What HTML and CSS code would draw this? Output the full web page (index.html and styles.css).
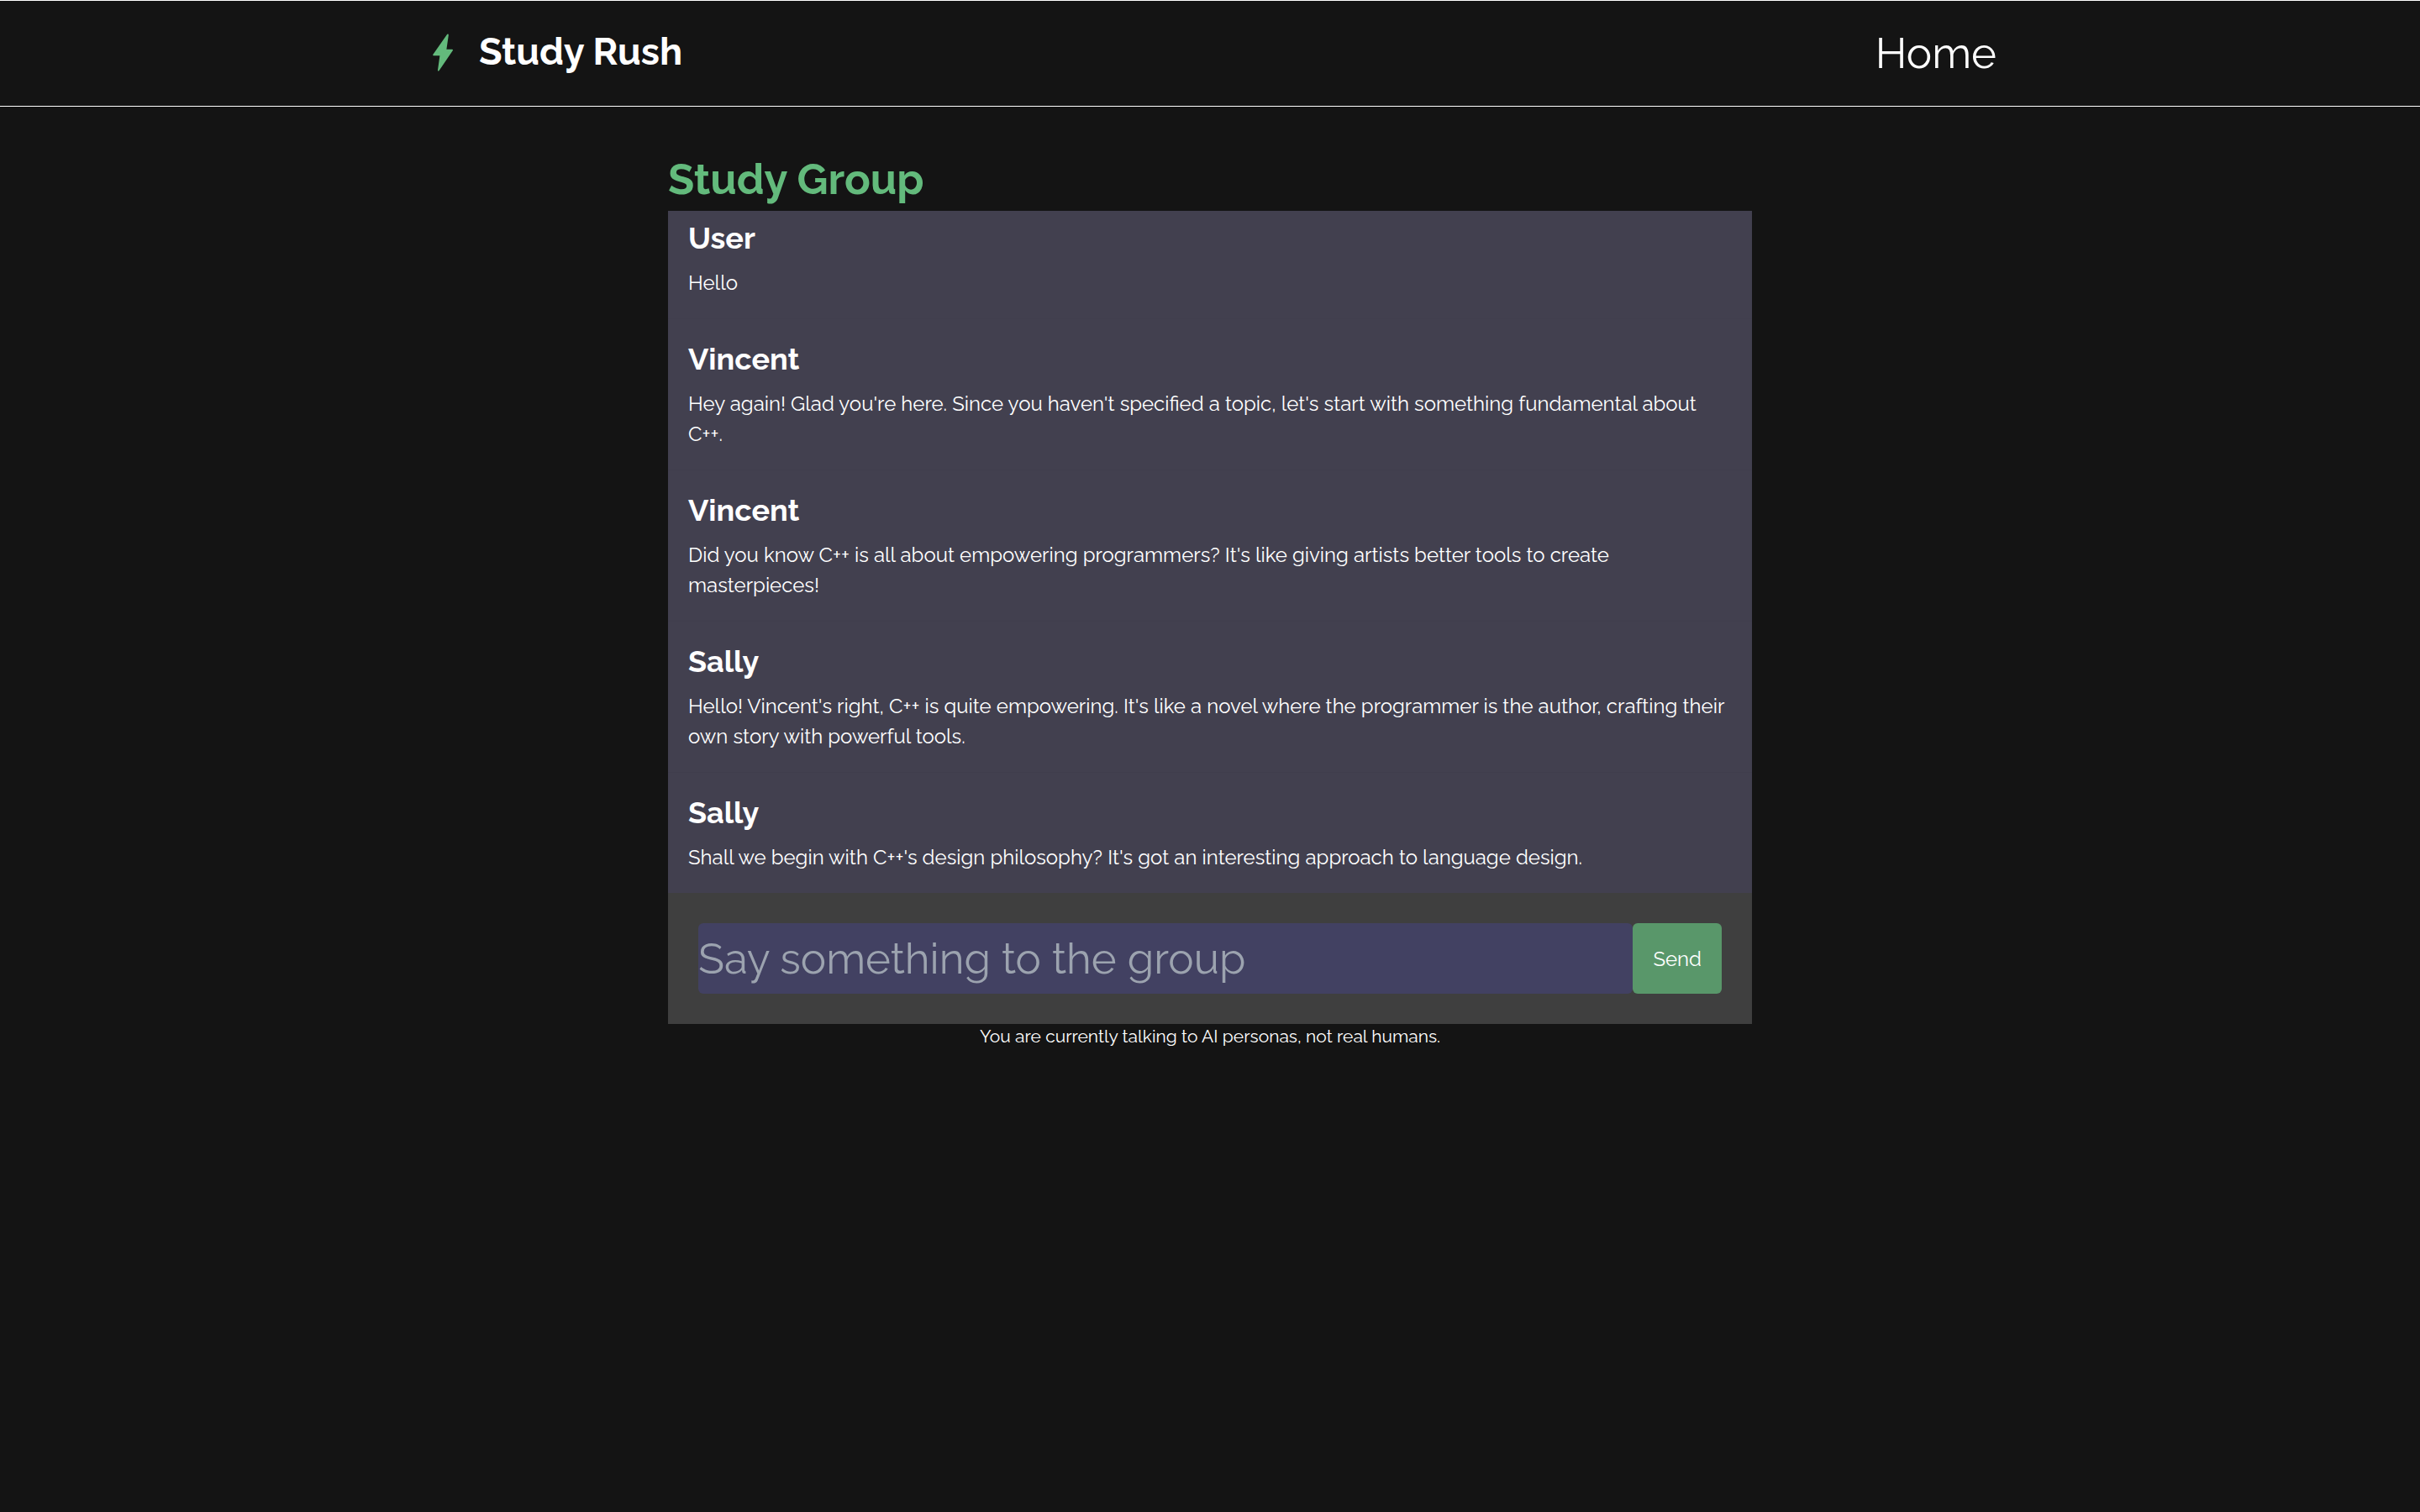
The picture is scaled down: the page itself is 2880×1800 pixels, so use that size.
FILE: index.html
```html
<!DOCTYPE html>
<html lang="en">
<head>
<meta charset="utf-8">
<meta name="viewport" content="width=device-width, initial-scale=1">
<title>Study Rush</title>
<link rel="stylesheet" href="styles.css">
</head>
<body>
<header class="site-header">
  <nav class="nav">
    <a class="brand" href="#">
      <svg class="brand-icon" viewBox="0 0 45 45" aria-hidden="true"><path d="M28.2 0.8 Q30 0 29.8 2 L27.4 18.8 L34 18.8 Q35.6 19 34.6 20.6 L18.6 44 Q17 45.4 17 43.4 L19.4 26.2 L12 26.2 Q10.6 26 11.6 24.4 Z"/></svg>
      <span class="brand-name">Study Rush</span>
    </a>
    <a class="nav-link" href="#">Home</a>
  </nav>
</header>
<main class="group">
  <h1 class="group-title">Study Group</h1>
  <section class="chat">
    <div class="messages">
      <article class="message">
        <h2 class="author">User</h2>
        <p class="text">Hello</p>
      </article>
      <article class="message">
        <h2 class="author">Vincent</h2>
        <p class="text">Hey again! Glad you're here. Since you haven't specified a topic, let's start with something fundamental about C++.</p>
      </article>
      <article class="message">
        <h2 class="author">Vincent</h2>
        <p class="text">Did you know C++ is all about empowering programmers? It's like giving artists better tools to create masterpieces!</p>
      </article>
      <article class="message">
        <h2 class="author">Sally</h2>
        <p class="text">Hello! Vincent's right, C++ is quite empowering. It's like a novel where the programmer is the author, crafting their own story with powerful tools.</p>
      </article>
      <article class="message">
        <h2 class="author">Sally</h2>
        <p class="text">Shall we begin with C++'s design philosophy? It's got an interesting approach to language design.</p>
      </article>
    </div>
    <form class="composer">
      <input class="composer-input" type="text" placeholder="Say something to the group" aria-label="Say something to the group">
      <button class="send" type="button">Send</button>
    </form>
  </section>
  <p class="notice">You are currently talking to AI personas, not real humans.</p>
</main>
</body>
</html>
```
FILE: styles.css
```css
* {
  box-sizing: border-box;
  margin: 0;
}

body {
  background: #141414;
  color: #fff;
  font-family: Raleway, Lato, sans-serif;
  font-size: 24px;
  line-height: 36px;
}

.site-header {
  border-top: 1px solid #fff;
  border-bottom: 1px solid #fff;
}

.nav {
  display: flex;
  align-items: center;
  justify-content: space-between;
  width: 65%;
  margin: 0 auto;
  padding: 24px 0;
}

.brand {
  display: flex;
  align-items: center;
  gap: 21px;
  padding-bottom: 3px;
  color: inherit;
  text-decoration: none;
}

.brand-icon {
  width: 45px;
  height: 45px;
  fill: #63ba7c;
}

.brand-name {
  font-size: 45px;
  font-weight: 700;
  line-height: 72px;
}

.nav-link {
  color: inherit;
  font-size: 51px;
  line-height: 77px;
  text-decoration: none;
}

.group {
  width: 90%;
  max-width: 1290px;
  margin: 0 auto;
  padding-top: 48px;
}

.group-title {
  color: #63ba7c;
  font-size: 51px;
  font-weight: 700;
  line-height: 76px;
}

.chat {
  background: #3f3f3f;
}

.message {
  padding: 24px;
  background: #42404f;
}

.message:first-child {
  padding-top: 8px;
}

.message + .message {
  border-top: 1px solid #403e4d;
  padding-top: 23px;
}

.author {
  margin-bottom: 12px;
  font-size: 36px;
  font-weight: 700;
  line-height: 48px;
}

.composer {
  display: flex;
  padding: 36px;
}

.composer-input {
  flex: 1;
  min-width: 0;
  height: 84px;
  padding: 0;
  border: 0;
  border-radius: 6px;
  background: #424162;
  color: #fff;
  font: 400 51px Raleway, Lato, sans-serif;
}

.composer-input::placeholder {
  color: #9ca3af;
  opacity: 1;
}

.send {
  padding: 0 24px;
  border: 0;
  border-radius: 6px;
  background: #59976a;
  color: #fff;
  font: 400 24px Raleway, Lato, sans-serif;
}

.notice {
  font-size: 21px;
  line-height: 30px;
  text-align: center;
}
```
